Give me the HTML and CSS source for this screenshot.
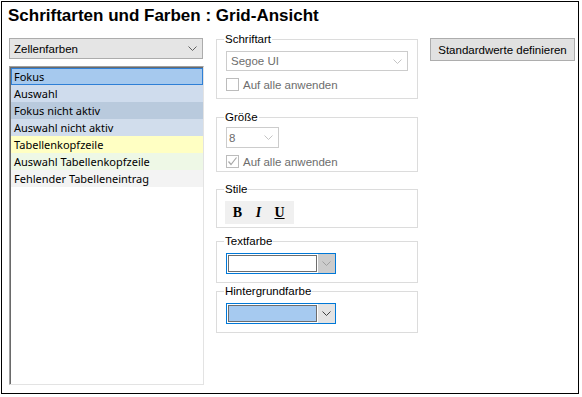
FILE: index.html
```html
<!DOCTYPE html>
<html lang="de">
<head>
    <meta charset="UTF-8">
    <meta name="viewport" content="width=device-width, initial-scale=1.0">
    <title>Schriftarten und Farben</title>
    <link rel="stylesheet" href="styles.css">
</head>
<body>
    <div class="dialog">
        <h1 class="title">Schriftarten und Farben : Grid-Ansicht</h1>
        <div class="content">
            <div class="left-col">
                <div class="combo category">
                    <span>Zellenfarben</span>
                    <svg class="chevron" width="9" height="5" viewBox="0 0 9 5"><polyline points="0.5,0.5 4.5,4.5 8.5,0.5" fill="none" stroke="#606060"/></svg>
                </div>
                <ul class="listbox">
                    <li class="item focus">Fokus</li>
                    <li class="item selection">Auswahl</li>
                    <li class="item focus-inactive">Fokus nicht aktiv</li>
                    <li class="item selection-inactive">Auswahl nicht aktiv</li>
                    <li class="item header">Tabellenkopfzeile</li>
                    <li class="item header-selection">Auswahl Tabellenkopfzeile</li>
                    <li class="item missing">Fehlender Tabelleneintrag</li>
                </ul>
            </div>

            <div class="mid-col">
                <fieldset class="group font-group">
                    <legend>Schriftart</legend>
                    <div class="combo disabled font-combo">
                        <span>Segoe UI</span>
                        <svg class="chevron" width="9" height="5" viewBox="0 0 9 5"><polyline points="0.5,0.5 4.5,4.5 8.5,0.5" fill="none" stroke="#c4c4c4"/></svg>
                    </div>
                    <label class="check-row">
                        <span class="checkbox"></span>
                        <span>Auf alle anwenden</span>
                    </label>
                </fieldset>

                <fieldset class="group size-group">
                    <legend>Größe</legend>
                    <div class="combo disabled size-combo">
                        <span>8</span>
                        <svg class="chevron" width="9" height="5" viewBox="0 0 9 5"><polyline points="0.5,0.5 4.5,4.5 8.5,0.5" fill="none" stroke="#c4c4c4"/></svg>
                    </div>
                    <label class="check-row">
                        <span class="checkbox">
                            <svg width="11" height="11" viewBox="0 0 11 11"><polyline points="1.5,5.5 4,8.5 9.5,1.5" fill="none" stroke="#a8a8a8" stroke-width="1.2"/></svg>
                        </span>
                        <span>Auf alle anwenden</span>
                    </label>
                </fieldset>

                <fieldset class="group style-group">
                    <legend>Stile</legend>
                    <div class="style-bar">
                        <span class="style-btn bold">B</span>
                        <span class="style-btn italic">I</span>
                        <span class="style-btn underline">U</span>
                    </div>
                </fieldset>

                <fieldset class="group color-group">
                    <legend>Textfarbe</legend>
                    <div class="color-combo">
                        <span class="swatch"></span>
                        <span class="drop-btn inactive">
                            <svg width="9" height="5" viewBox="0 0 9 5"><polyline points="0.5,0.5 4.5,4.5 8.5,0.5" fill="none" stroke="#a0a0a0"/></svg>
                        </span>
                    </div>
                </fieldset>

                <fieldset class="group color-group bg-group">
                    <legend>Hintergrundfarbe</legend>
                    <div class="color-combo">
                        <span class="swatch" style="background-color: #a6caf0;"></span>
                        <span class="drop-btn">
                            <svg width="9" height="5" viewBox="0 0 9 5"><polyline points="0.5,0.5 4.5,4.5 8.5,0.5" fill="none" stroke="#404040"/></svg>
                        </span>
                    </div>
                </fieldset>
            </div>

            <div class="right-col">
                <button class="button">Standardwerte definieren</button>
            </div>
        </div>
    </div>
</body>
</html>
```

FILE: styles.css
```css
body {
    margin: 0;
    background-color: #ffffff;
    font-family: 'Liberation Sans', Arial, sans-serif;
    color: #000000;
}
.dialog {
    width: 576px;
    height: 391px;
    margin: 1px;
    border: 1px solid #000000;
    background-color: #ffffff;
}
.title {
    margin: 0;
    padding: 4px 0 0 6px;
    font-size: 17px;
    line-height: 20px;
    font-weight: bold;
}
.content {
    display: flex;
    align-items: flex-start;
}

/* Left column */
.left-col {
    display: flex;
    flex-direction: column;
    margin: 12px 0 0 7px;
    width: 195px;
}
.combo {
    display: flex;
    align-items: center;
    justify-content: space-between;
    box-sizing: border-box;
    border: 1px solid #acacac;
    font-size: 11.5px;
    padding: 0 5px 0 4px;
}
.combo .chevron {
    flex: none;
}
.category {
    width: 194px;
    height: 21px;
    background-color: #e5e5e5;
}
.listbox {
    list-style: none;
    margin: 7px 0 0 0;
    padding: 1px 0 0 1px;
    box-sizing: border-box;
    width: 195px;
    height: 319px;
    border-top: 1px solid #a0a0a0;
    border-left: 1px solid #a0a0a0;
    border-right: 1px solid #e3e3e3;
    border-bottom: 1px solid #e3e3e3;
    box-shadow: inset 1px 1px 0 #6a6a6a;
}
.item {
    height: 17px;
    line-height: 17px;
    padding-left: 3px;
    font-family: 'Noto Sans', sans-serif;
    font-size: 11px;
    box-sizing: border-box;
}
.focus {
    background-color: #a6c9ee;
    border: 1px solid #2e7fd6;
    line-height: 15px;
    padding-left: 2px;
}
.selection {
    background-color: #cfdced;
}
.focus-inactive {
    background-color: #b9cadd;
}
.selection-inactive {
    background-color: #d1ddec;
}
.header {
    background-color: #ffffc3;
}
.header-selection {
    background-color: #eef8e6;
}
.missing {
    background-color: #f3f3f3;
}

/* Middle column */
.mid-col {
    display: flex;
    flex-direction: column;
    margin: 6px 0 0 12px;
    width: 202px;
}
.group {
    box-sizing: border-box;
    margin: 0;
    padding: 5px 8px 0 9px;
    border: 1px solid #dcdcdc;
    font-size: 11.5px;
}
.group legend {
    padding: 0 1px;
    margin-left: -2px;
    line-height: 14px;
    font-size: 11.5px;
}
.font-group {
    height: 67px;
}
.size-group {
    height: 62px;
    margin-top: 11px;
    padding-top: 3px;
}
.style-group {
    height: 46px;
    margin-top: 10px;
}
.color-group {
    height: 49px;
    margin-top: 6px;
}
.bg-group {
    margin-top: 1px;
}
.disabled {
    border-color: #cccccc;
    background-color: #ffffff;
    color: #6d6d6d;
}
.font-combo {
    width: 182px;
    height: 20px;
}
.size-combo {
    width: 53px;
    height: 21px;
    padding-left: 2px;
}
.check-row {
    display: flex;
    align-items: center;
    gap: 4px;
    margin-top: 7px;
    color: #6d6d6d;
    height: 13px;
}
.checkbox {
    display: flex;
    align-items: center;
    justify-content: center;
    box-sizing: border-box;
    width: 13px;
    height: 13px;
    border: 1px solid #bcbcbc;
    background-color: #ffffff;
}
.style-bar {
    display: flex;
    align-items: center;
    width: 69px;
    height: 23px;
    margin-left: -1px;
    padding-left: 6px;
    box-sizing: border-box;
    gap: 8px;
    background-color: #f0f0f0;
}
.style-btn {
    width: 13px;
    text-align: center;
    font-family: 'Liberation Serif', serif;
    font-weight: bold;
    font-size: 14px;
}
.italic {
    font-style: italic;
}
.underline {
    text-decoration: underline;
}
.color-combo {
    display: flex;
    align-items: stretch;
    box-sizing: border-box;
    width: 110px;
    height: 21px;
    border: 1px solid #0078d7;
    padding: 1px 0 1px 1px;
}
.swatch {
    flex: 1;
    border: 1px solid #6d6d6d;
    background-color: #ffffff;
}
.drop-btn {
    display: flex;
    align-items: center;
    justify-content: center;
    width: 17px;
    margin: -1px 0;
    background-color: #e3e3e3;
    border-left: 1px solid #ffffff;
}
.drop-btn.inactive {
    background-color: #cccccc;
}

/* Right column */
.right-col {
    margin: 12px 0 0 12px;
}
.button {
    width: 145px;
    height: 23px;
    padding: 0;
    font-family: 'Liberation Sans', Arial, sans-serif;
    font-size: 11.5px;
    color: #000000;
    background-color: #e1e1e1;
    border: 1px solid #adadad;
}
```
